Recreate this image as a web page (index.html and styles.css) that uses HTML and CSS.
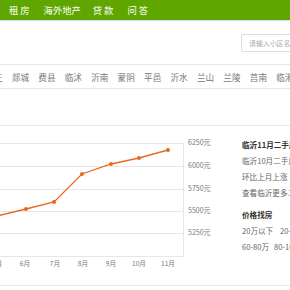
FILE: index.html
```html
<!DOCTYPE html>
<html lang="zh-CN">
<head>
    <meta charset="UTF-8">
    <meta name="viewport" content="width=device-width, initial-scale=1.0">
    <title>临沂房价</title>
    <link rel="stylesheet" href="styles.css">
</head>
<body>
    <div class="topnav">
        <a class="nav-item short">租房</a>
        <a class="nav-item">海外地产</a>
        <a class="nav-item short">贷款</a>
        <a class="nav-item short">问答</a>
    </div>

    <div class="search-row">
        <div class="search-box">请输入小区名或地址</div>
    </div>

    <div class="districts">
        <a class="dist">罗庄</a>
        <a class="dist">郯城</a>
        <a class="dist">费县</a>
        <a class="dist">临沭</a>
        <a class="dist">沂南</a>
        <a class="dist">蒙阴</a>
        <a class="dist">平邑</a>
        <a class="dist">沂水</a>
        <a class="dist">兰山</a>
        <a class="dist">兰陵</a>
        <a class="dist">莒南</a>
        <a class="dist">临港</a>
    </div>

    <div class="chart-section">
        <svg class="chart" width="236" height="159" viewBox="0 0 236 159">
            <g stroke="#e6e6e6" stroke-width="1">
                <line x1="0" y1="17.5" x2="183" y2="17.5"/>
                <line x1="0" y1="40.5" x2="183" y2="40.5"/>
                <line x1="0" y1="63.5" x2="183" y2="63.5"/>
                <line x1="0" y1="85.5" x2="183" y2="85.5"/>
                <line x1="0" y1="107.5" x2="183" y2="107.5"/>
                <line x1="0" y1="130.5" x2="183" y2="130.5"/>
                <line x1="183.5" y1="17" x2="183.5" y2="131"/>
            </g>
            <g class="ylabel">
                <text x="188" y="17">6250元</text>
                <text x="188" y="40">6000元</text>
                <text x="188" y="63">5750元</text>
                <text x="188" y="85">5500元</text>
                <text x="188" y="107">5250元</text>
            </g>
            <g class="xlabel">
                <text x="-3" y="138">5月</text>
                <text x="25" y="138">6月</text>
                <text x="55" y="138">7月</text>
                <text x="83" y="138">8月</text>
                <text x="111" y="138">9月</text>
                <text x="139" y="138">10月</text>
                <text x="168" y="138">11月</text>
            </g>
            <polyline points="-3,90 26,83 54,76 82,48 111,38 139,32 168,24" fill="none" stroke="#e7691f" stroke-width="1.3"/>
            <g fill="#e7691f">
                <circle cx="26" cy="83" r="2"/>
                <circle cx="54" cy="76" r="2"/>
                <circle cx="82" cy="48" r="2"/>
                <circle cx="111" cy="38" r="2"/>
                <circle cx="139" cy="32" r="2"/>
                <circle cx="168" cy="24" r="2"/>
            </g>
        </svg>

        <div class="side">
            <div class="line title">临沂11月二手房均价</div>
            <div class="line">临沂10月二手房均价 6053元/㎡</div>
            <div class="line">环比上月上涨 <span class="up">1.92%</span></div>
            <div class="line">查看临沂更多<span class="more">二手房价</span></div>
            <div class="line title price-title">价格找房</div>
            <div class="line prices"><a class="p1">20万以下</a><a>20-40万</a></div>
            <div class="line prices"><a class="p2">60-80万</a><a>80-100万</a></div>
        </div>
    </div>
</body>
</html>
```

FILE: styles.css
```css
body{
    margin: 0;
    width: 290px;
    height: 290px;
    overflow: hidden;
    background: #fff;
    font-family: "Noto Sans CJK SC", "Noto Sans", sans-serif;
    color: #666;
}
a{
    color: inherit;
    text-decoration: none;
}

.topnav{
    height: 20px;
    background-color: #5fa700;
    display: flex;
    align-items: center;
    gap: 12px;
    padding-left: 9px;
    box-shadow: 0 1px 1px rgba(0,0,0,0.12);
}
.nav-item{
    color: #fff;
    font-size: 9.3px;
    white-space: nowrap;
}
.nav-item.short{
    letter-spacing: 2px;
}

.search-row{
    height: 44px;
    box-sizing: border-box;
    padding-top: 14px;
    padding-left: 241px;
}
.search-box{
    width: 80px;
    height: 18px;
    box-sizing: border-box;
    border: 1px solid #dcdcdc;
    border-radius: 2px;
    padding-left: 7px;
    font-size: 6.9px;
    line-height: 16px;
    color: #aaa;
    white-space: nowrap;
}

.districts{
    height: 23px;
    border-top: 1px solid #e8e8e8;
    border-bottom: 1px solid #e8e8e8;
    display: flex;
    align-items: center;
    margin-left: -19.2px;
}
.dist{
    flex: none;
    width: 26.45px;
    text-align: center;
    font-size: 8.6px;
    color: #777;
    white-space: nowrap;
}

.chart-section{
    margin-top: 36px;
    height: 159px;
    border-top: 1px solid #e8e8e8;
    border-bottom: 1px solid #e8e8e8;
    display: flex;
}
.chart{
    flex: none;
    display: block;
    overflow: visible;
}
.ylabel text{
    font-size: 7px;
    fill: #777;
    dominant-baseline: middle;
}
.xlabel text{
    font-size: 6.6px;
    fill: #777;
    text-anchor: middle;
    dominant-baseline: middle;
}

.side{
    padding-left: 6px;
    padding-top: 11px;
    overflow: hidden;
    white-space: nowrap;
    font-size: 7.6px;
}
.line{
    line-height: 16px;
}
.title{
    color: #333;
    font-weight: bold;
}
.price-title{
    margin-top: 6px;
}
.up{
    color: #f2a21c;
}
.more{
    color: #2fa0c8;
}
.prices{
    display: flex;
}
.prices a{
    flex: none;
}
.prices .p1{
    width: 38px;
}
.prices .p2{
    width: 32px;
}
```
